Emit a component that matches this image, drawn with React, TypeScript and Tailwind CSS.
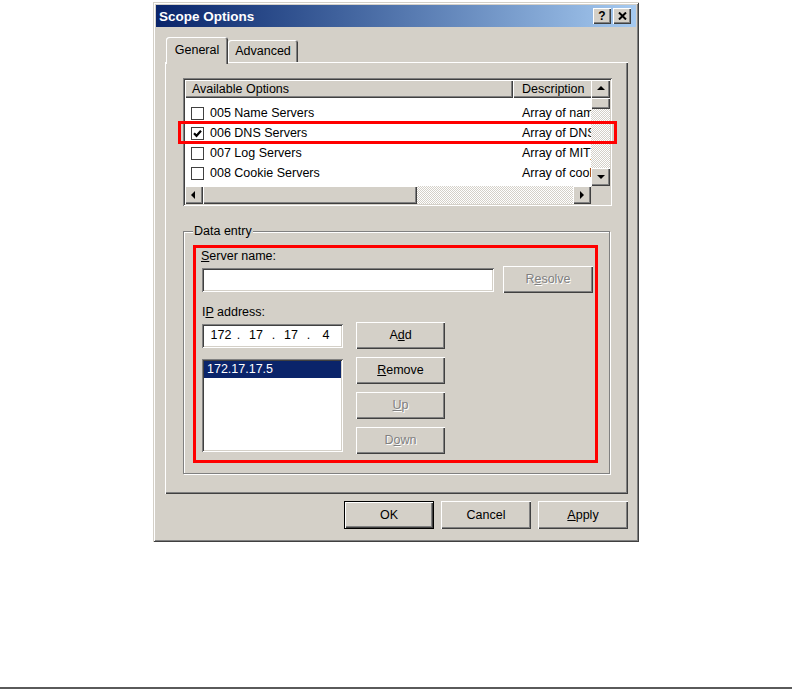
import React from "react";

const raised =
  "shadow-[inset_1px_1px_0_#ffffff,inset_-1px_-1px_0_#404040,inset_-2px_-2px_0_#808080]";
const sunken =
  "shadow-[inset_1px_1px_0_#808080,inset_-1px_-1px_0_#ffffff,inset_2px_2px_0_#404040,inset_-2px_-2px_0_#d4d0c8]";
const dither =
  "bg-[image:repeating-conic-gradient(#d4d0c8_0%_25%,#ffffff_0%_50%)] bg-size-[2px_2px] bg-[length:2px_2px]";

function Btn({
  className,
  children,
  disabled,
  isDefault,
}: {
  className: string;
  children: React.ReactNode;
  disabled?: boolean;
  isDefault?: boolean;
}) {
  return (
    <div
      className={`${className} flex items-center justify-center bg-[#d4d0c8] ${raised} ${
        isDefault ? "border border-black" : ""
      } ${disabled ? "text-[#808080] [text-shadow:1px_1px_0_#ffffff]" : "text-black"}`}
    >
      {children}
    </div>
  );
}

function Arrow({ dir }: { dir: "up" | "down" | "left" | "right" }) {
  const pts =
    dir === "up"
      ? "1,6 5,2 9,6"
      : dir === "down"
      ? "1,3 5,7 9,3"
      : dir === "left"
      ? "6,1 2,5 6,9"
      : "3,1 7,5 3,9";
  return (
    <svg width="10" height="10" viewBox="0 0 10 10">
      <polygon points={pts} fill="#000" />
    </svg>
  );
}

function ScrollBtn({ dir, className }: { dir: "up" | "down" | "left" | "right"; className: string }) {
  return (
    <div className={`${className} shrink-0 flex items-center justify-center bg-[#d4d0c8] ${raised}`}>
      <Arrow dir={dir} />
    </div>
  );
}

function CheckBox({ checked }: { checked?: boolean }) {
  return (
    <div className="w-[13px] h-[13px] shrink-0 bg-white flex items-center justify-center border border-[#404040]">
      {checked && (
        <svg width="9" height="9" viewBox="0 0 9 9">
          <polyline points="1,4.2 3.5,6.8 8,1.8" fill="none" stroke="#000" strokeWidth="2.2" />
        </svg>
      )}
    </div>
  );
}

const rows: [string, string, boolean][] = [
  ["005 Name Servers", "Array of name servers", false],
  ["006 DNS Servers", "Array of DNS servers", true],
  ["007 Log Servers", "Array of MIT_LCS UDP log servers", false],
  ["008 Cookie Servers", "Array of cookie servers", false],
];

export default function App() {
  return (
    <div className="w-[792px] h-[690px] bg-white flex flex-col font-['Liberation_Sans',Arial,sans-serif] text-[12.5px] text-black">
      {/* Dialog */}
      <div
        className={`ml-[153px] mt-[2px] w-[486px] h-[540px] bg-[#d4d0c8] p-[3px] flex flex-col shadow-[inset_1px_1px_0_#d4d0c8,inset_-1px_-1px_0_#404040,inset_2px_2px_0_#ffffff,inset_-2px_-2px_0_#808080]`}
      >
        {/* Title bar */}
        <div className="h-[22px] shrink-0 flex items-center bg-linear-to-r from-[#0a246a] to-[#a6caf0] pl-[3px] pr-[5px]">
          <span className="text-white font-bold text-[13.5px] leading-none pt-[1px]">Scope Options</span>
          <div className="ml-auto flex gap-[2px]">
            <div className={`w-[18px] h-[16px] bg-[#d4d0c8] ${raised} flex items-center justify-center`}>
              <span className="font-bold text-[12px] leading-none text-black pb-[1px]">?</span>
            </div>
            <div className={`w-[18px] h-[16px] bg-[#d4d0c8] ${raised} flex items-center justify-center`}>
              <svg width="9" height="8" viewBox="0 0 9 8">
                <path d="M1 0.5 L8 7.5 M8 0.5 L1 7.5" stroke="#000" strokeWidth="2" />
              </svg>
            </div>
          </div>
        </div>

        {/* Tabs */}
        <div className="relative z-10 ml-[10px] mt-[10px] h-[25px] flex items-end">
          <div className="w-[62px] h-[27px] -mb-[2px] bg-[#d4d0c8] rounded-t-[3px] flex items-center justify-center pb-[1px] shadow-[inset_1px_1px_0_#ffffff,inset_-1px_0_0_#404040,inset_-2px_0_0_#808080]">
            General
          </div>
          <div className="w-[70px] h-[22px] bg-[#d4d0c8] rounded-t-[3px] flex items-center justify-center pt-[1px] shadow-[inset_1px_1px_0_#ffffff,inset_-1px_0_0_#404040,inset_-2px_0_0_#808080]">
            Advanced
          </div>
        </div>

        {/* Tab panel */}
        <div className={`ml-[9px] w-[463px] h-[432px] shrink-0 bg-[#d4d0c8] ${raised} pl-[18px] pt-[16px] flex flex-col`}>
          {/* List view */}
          <div className={`relative w-[429px] h-[128px] bg-white p-[2px] flex flex-col ${sunken}`}>
            <div className="flex h-[106px]">
              <div className="w-[406px] flex flex-col overflow-hidden">
                <div className="flex h-[18px] shrink-0">
                  <div className={`w-[328px] shrink-0 pl-[7px] flex items-center bg-[#d4d0c8] ${raised}`}>
                    Available Options
                  </div>
                  <div className={`flex-1 min-w-0 pl-[9px] flex items-center bg-[#d4d0c8] whitespace-nowrap overflow-hidden shadow-[inset_1px_1px_0_#ffffff,inset_0_-1px_0_#404040,inset_0_-2px_0_#808080]`}>
                    Description
                  </div>
                </div>
                <div className="pt-[5px] flex flex-col">
                  {rows.map(([name, desc, checked]) => (
                    <div key={name} className="h-[20px] flex items-center whitespace-nowrap">
                      <div className="w-[328px] shrink-0 flex items-center pl-[6px]">
                        <CheckBox checked={checked} />
                        <span className="ml-[6px]">{name}</span>
                      </div>
                      <div className="pl-[9px] overflow-hidden">{desc}</div>
                    </div>
                  ))}
                </div>
              </div>
              {/* Vertical scrollbar */}
              <div className="w-[19px] flex flex-col">
                <ScrollBtn dir="up" className="h-[18px] w-full" />
                <div className={`h-[11px] shrink-0 bg-[#d4d0c8] ${raised}`} />
                <div className={`flex-1 ${dither}`} />
                <ScrollBtn dir="down" className="h-[18px] w-full" />
              </div>
            </div>
            {/* Horizontal scrollbar */}
            <div className="flex h-[18px]">
              <div className="w-[406px] flex">
                <ScrollBtn dir="left" className="w-[18px] h-full" />
                <div className={`w-[214px] shrink-0 bg-[#d4d0c8] ${raised}`} />
                <div className={`flex-1 ${dither}`} />
                <ScrollBtn dir="right" className="w-[18px] h-full" />
              </div>
              <div className="w-[19px] bg-[#d4d0c8]" />
            </div>
            {/* highlight annotation */}
            <div className="absolute left-[-5px] top-[43px] w-[439px] h-[23px] border-[3px] border-[#ff0000]" />
          </div>

          {/* Data entry group */}
          <div className="relative mt-[25px] w-[427px] h-[243px] border border-[#808080] shadow-[inset_1px_1px_0_#ffffff,1px_1px_0_#ffffff] pt-[13px] pl-[9px]">
            <div className="absolute -top-[9px] left-[9px] px-[1px] bg-[#d4d0c8] leading-[16px]">Data entry</div>
            <div className="w-[405px] h-[218px] border-[3px] border-[#ff0000] pl-[6px] flex flex-col">
              <div className="h-[16px] leading-[16px] -ml-[1px]">
                <span className="underline">S</span>erver name:
              </div>
              <div className="mt-[2px] h-[27px] flex items-center">
                <div className={`w-[292px] h-[24px] bg-white ${sunken}`} />
                <Btn className="ml-[9px] w-[90px] h-[27px]" disabled>
                  R<span className="underline">e</span>solve
                </Btn>
              </div>
              <div className="mt-[11px] h-[16px] leading-[16px]">
                I<span className="underline">P</span> address:
              </div>
              <div className="mt-[2px] h-[27px] flex items-center">
                <div className={`w-[141px] h-[24px] bg-white pl-[5px] flex items-center ${sunken}`}>
                  <span className="w-[28px] text-center">172</span>
                  <span className="w-[7px] text-center">.</span>
                  <span className="w-[28px] text-center">17</span>
                  <span className="w-[7px] text-center">.</span>
                  <span className="w-[28px] text-center">17</span>
                  <span className="w-[7px] text-center">.</span>
                  <span className="w-[28px] text-center">4</span>
                </div>
                <Btn className="ml-[13px] w-[89px] h-[27px]">
                  A<span className="underline">d</span>d
                </Btn>
              </div>
              <div className="mt-[8px] flex items-start">
                <div className={`mt-[2px] w-[141px] h-[93px] bg-white p-[2px] ${sunken}`}>
                  <div className="h-[17px] bg-[#0a246a] text-white pl-[3px] flex items-center">172.17.17.5</div>
                </div>
                <div className="ml-[13px] flex flex-col gap-[8px]">
                  <Btn className="w-[89px] h-[27px]">
                    <span className="underline">R</span>emove
                  </Btn>
                  <Btn className="w-[89px] h-[27px]" disabled>
                    <span className="underline">U</span>p
                  </Btn>
                  <Btn className="w-[89px] h-[27px]" disabled>
                    D<span className="underline">o</span>wn
                  </Btn>
                </div>
              </div>
            </div>
          </div>
        </div>

        {/* Bottom buttons */}
        <div className="mt-[7px] mr-[8px] flex justify-end gap-[7px]">
          <Btn className="w-[90px] h-[28px]" isDefault>
            OK
          </Btn>
          <Btn className="w-[90px] h-[28px]">Cancel</Btn>
          <Btn className="w-[90px] h-[28px]">
            <span className="underline">A</span>pply
          </Btn>
        </div>
      </div>

      <div className="mt-auto mb-[1px] h-[2px] bg-[#5a5a5a]" />
    </div>
  );
}
